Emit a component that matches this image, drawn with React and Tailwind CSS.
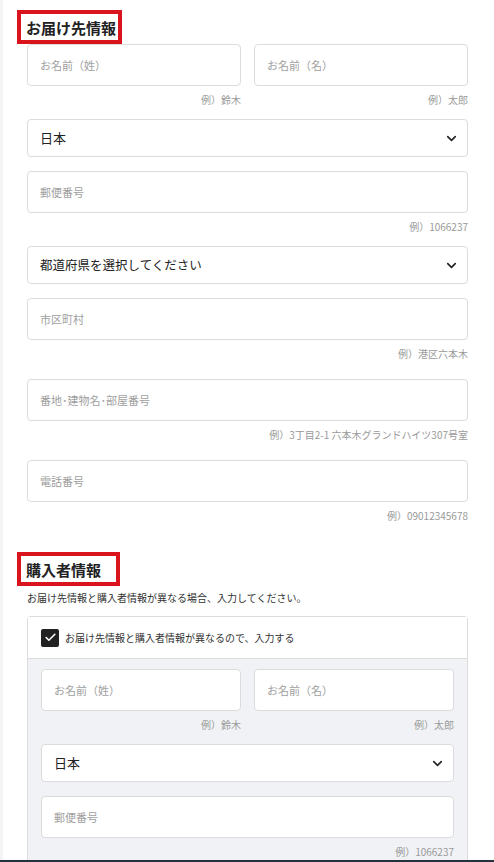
import { ChevronDown, Check } from "lucide-react";

const font = { fontFamily: '"Noto Sans CJK JP", "Noto Sans", sans-serif' };

function Heading({ children }) {
  return (
    <div className="ml-[14px] flex h-[34px] min-w-[103px] w-fit items-center whitespace-nowrap border-4 border-[#d9141c] pl-[5px] pr-[2px]">
      <span className="text-[15px] font-bold leading-none text-[#222]">{children}</span>
    </div>
  );
}

function Hint({ children, tall }) {
  return (
    <div
      className={
        "mt-[7px] whitespace-nowrap text-right text-[10px] leading-[14px] text-[#9a9a9a] " +
        (tall ? "mb-[18px]" : "mb-[12px]")
      }
    >
      {children}
    </div>
  );
}

function Input({ placeholder }) {
  return (
    <div className="flex h-[42px] items-center rounded-[4px] border border-[#dcdcdc] bg-white px-[12px] text-[11px] text-[#a0a0a0]">
      {placeholder}
    </div>
  );
}

function Select({ value, big }) {
  return (
    <div className="mb-[14px] flex h-[38px] items-center justify-between rounded-[4px] border border-[#dcdcdc] bg-white pl-[12px] pr-[8px]">
      <span className={big ? "text-[12.5px] text-[#222]" : "text-[13px] text-[#222]"}>{value}</span>
      <ChevronDown size={15} strokeWidth={2.6} className="text-[#222]" />
    </div>
  );
}

function NameRow() {
  return (
    <div className="grid grid-cols-2 gap-[13px]">
      <div>
        <Input placeholder="お名前（姓）" />
        <Hint>例）鈴木</Hint>
      </div>
      <div>
        <Input placeholder="お名前（名）" />
        <Hint>例）太郎</Hint>
      </div>
    </div>
  );
}

export default function App() {
  return (
    <div className="flex h-[862px] w-[494px] flex-col overflow-hidden bg-white" style={font}>
      <div className="flex-1 overflow-hidden border-l-[3px] border-[#f3f4f5]">
        <div className="pt-[10px]">
          <Heading>お届け先情報</Heading>
        </div>

        <div className="ml-[24px] mr-[26px]">
          <NameRow />
          <Select value="日本" />
          <Input placeholder="郵便番号" />
          <Hint>例）1066237</Hint>
          <Select value="都道府県を選択してください" big />
          <Input placeholder="市区町村" />
          <Hint tall>例）港区六本木</Hint>
          <Input placeholder="番地･建物名･部屋番号" />
          <Hint tall>例）3丁目2-1 六本木グランドハイツ307号室</Hint>
          <Input placeholder="電話番号" />
          <Hint>例）09012345678</Hint>
        </div>

        <div className="mt-[29px]">
          <Heading>購入者情報</Heading>
        </div>
        <p className="ml-[24px] mt-[5px] text-[10px] leading-[14px] text-[#333]">
          お届け先情報と購入者情報が異なる場合、入力してください。
        </p>

        <div className="ml-[24px] mr-[26px] mt-[11px] rounded-t-[4px] border border-b-0 border-[#dcdcdc]">
          <div className="flex h-[42px] items-center gap-[6px] border-b border-[#dcdcdc] bg-white pl-[13px]">
            <span className="flex h-[18px] w-[18px] items-center justify-center rounded-[2px] bg-[#222]">
              <Check size={13} strokeWidth={3} className="text-white" />
            </span>
            <span className="text-[10px] text-[#333]">お届け先情報と購入者情報が異なるので、入力する</span>
          </div>
          <div className="bg-[#f0f2f5] px-[13px] pt-[10px] pb-[20px]">
            <NameRow />
            <Select value="日本" />
            <Input placeholder="郵便番号" />
            <Hint>例）1066237</Hint>
          </div>
        </div>
      </div>
      <div className="h-[2px] bg-[#27313c]" />
    </div>
  );
}
